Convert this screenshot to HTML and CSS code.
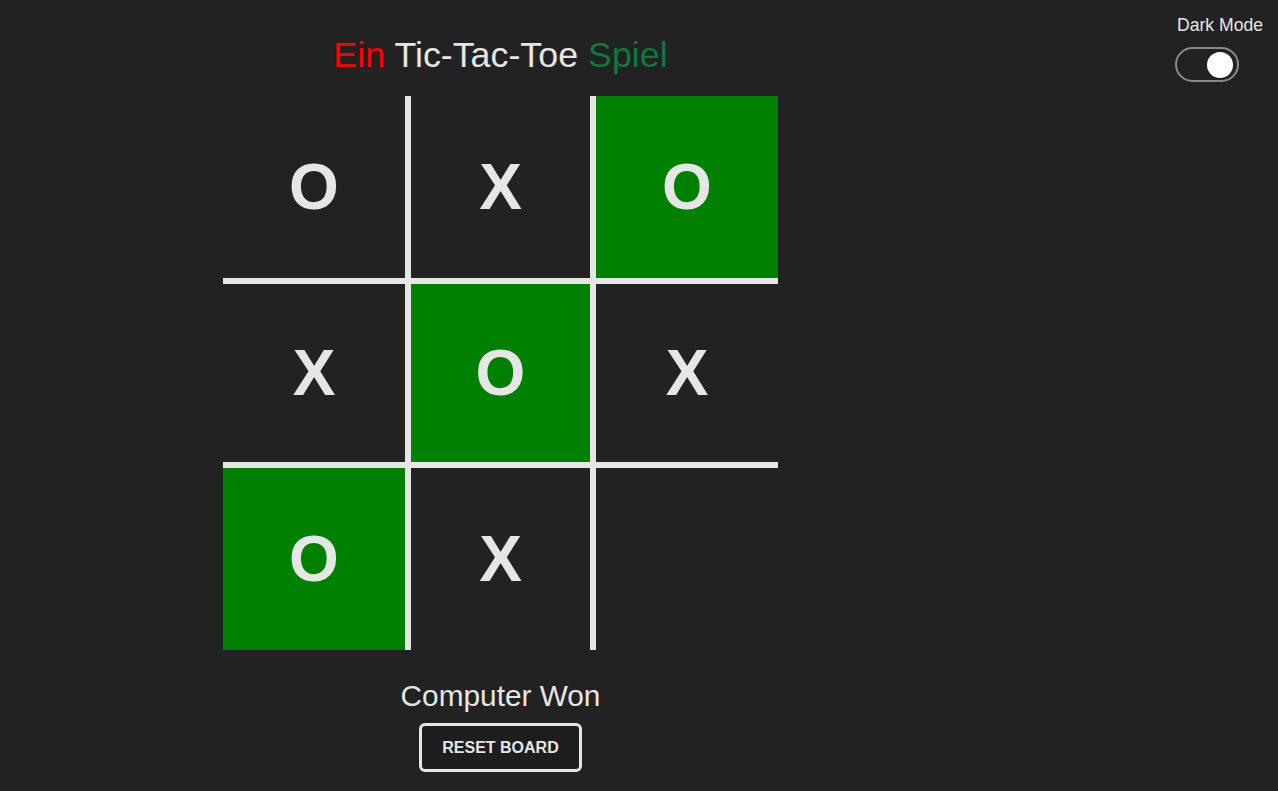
FILE: index.html
```html
<!DOCTYPE html>
<html lang="de">
<head>
<meta charset="utf-8">
<title>Tic-Tac-Toe</title>
<link rel="stylesheet" href="styles.css">
</head>
<body>
<div class="page">
  <main class="game">
    <h1 class="title"><span class="red">Ein</span> Tic-Tac-Toe <span class="green">Spiel</span></h1>
    <div class="board">
      <div class="cell c1">O</div>
      <div class="cell c2">X</div>
      <div class="cell c3 win">O</div>
      <div class="cell c4">X</div>
      <div class="cell c5 win">O</div>
      <div class="cell c6">X</div>
      <div class="cell c7 win">O</div>
      <div class="cell c8">X</div>
      <div class="cell c9"></div>
    </div>
    <p class="status">Computer Won</p>
    <button class="reset">RESET BOARD</button>
  </main>
  <aside class="settings">
    <div class="label">Dark Mode</div>
    <div class="toggle"><div class="knob"></div></div>
  </aside>
</div>
</body>
</html>
```
FILE: styles.css
```css
html, body {
  margin: 0;
  padding: 0;
  background: #222222;
  color: #e6e6e6;
  font-family: "Liberation Sans", Arial, sans-serif;
}

.page {
  display: flex;
  align-items: flex-start;
  min-height: 791px;
}

.game {
  width: 1001px;
  display: flex;
  flex-direction: column;
  align-items: center;
}

.title {
  margin: 35px 0 0;
  font-size: 35.8px;
  font-weight: normal;
  line-height: 40px;
  color: #e6e6e6;
}

.red { color: #ff0000; }
.green { color: #0b7a3a; }

.board {
  margin-top: 21px;
  display: grid;
  grid-template-columns: 185px 185px 185px;
  grid-template-rows: 185px 184px 185px;
}

.cell {
  box-sizing: border-box;
  display: flex;
  align-items: center;
  justify-content: center;
  font-size: 64px;
  font-weight: bold;
  color: #e6e6e6;
  border: 0 solid #e6e6e6;
}

.win { background: #008000; }

.c1 { border-right-width: 3px; border-bottom-width: 3px; }
.c2 { border-left-width: 3px; border-right-width: 3px; border-bottom-width: 3px; }
.c3 { border-left-width: 3px; border-bottom-width: 3px; }
.c4 { border-top-width: 3px; border-right-width: 3px; border-bottom-width: 3px; }
.c5 { border-width: 3px; }
.c6 { border-top-width: 3px; border-left-width: 3px; border-bottom-width: 3px; }
.c7 { border-top-width: 3px; border-right-width: 3px; }
.c8 { border-top-width: 3px; border-left-width: 3px; border-right-width: 3px; }
.c9 { border-top-width: 3px; border-left-width: 3px; }

.status {
  margin: 29px 0 0;
  font-size: 29.8px;
  line-height: 34px;
}

.reset {
  margin-top: 10px;
  padding: 12.5px 20px;
  font-family: "Liberation Sans", Arial, sans-serif;
  font-size: 16px;
  font-weight: bold;
  line-height: 18px;
  color: #e6e6e6;
  background: #1e1e1e;
  border: 3px solid #e6e6e6;
  border-radius: 6px;
}

.settings {
  margin-left: auto;
  padding: 15px 15px 0 0;
  display: flex;
  flex-direction: column;
  align-items: flex-start;
}

.label {
  font-size: 17.6px;
  line-height: 20px;
  padding-left: 2px;
}

.toggle {
  box-sizing: border-box;
  margin-top: 12px;
  width: 64px;
  height: 35px;
  border: 2px solid #8a8a8a;
  border-radius: 18px;
  background: #222222;
  display: flex;
  align-items: center;
  justify-content: flex-end;
  padding-right: 4px;
}

.knob {
  width: 26px;
  height: 26px;
  border-radius: 50%;
  background: #ffffff;
}
```
